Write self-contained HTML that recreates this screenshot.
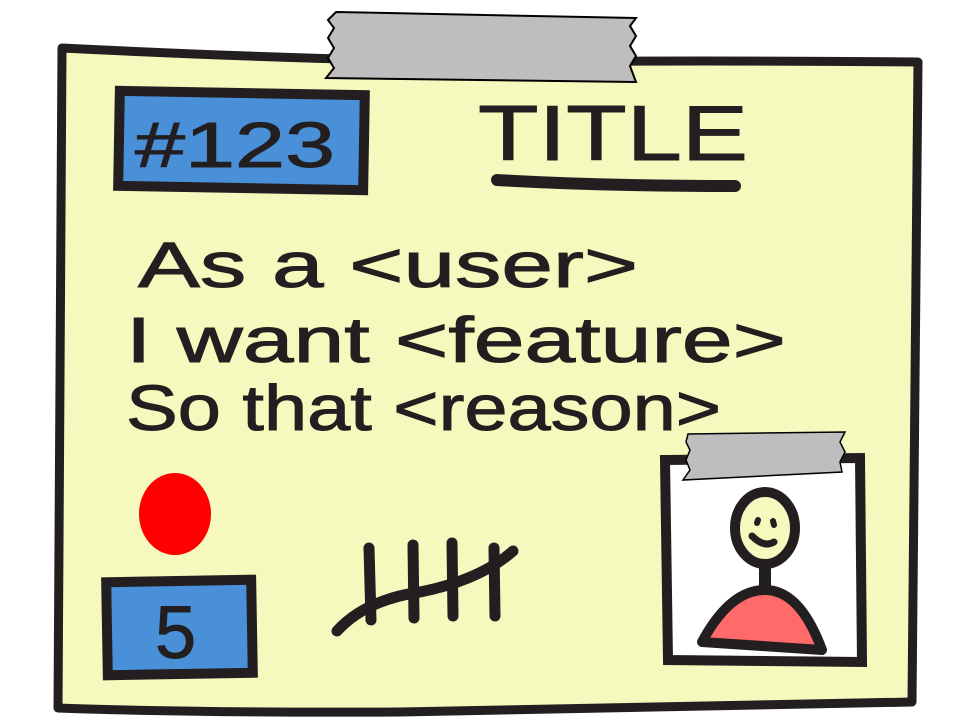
<!DOCTYPE html>
<html><head><style>
html,body{margin:0;padding:0;background:#fff;width:962px;height:720px;overflow:hidden}
svg{display:block}
text{font-family:"Liberation Sans",sans-serif;fill:#231f20;stroke:#231f20;stroke-width:1}
</style></head><body>
<svg width="962" height="720" viewBox="0 0 962 720">
<path d="M62,48 Q300,60 500,62 Q700,60 918,62 L912,702 Q600,708 400,712 Q200,713 58,708 Z" fill="#f6f9bd" stroke="#231f20" stroke-width="9" stroke-linejoin="round"/>
<path d="M336,12 L636,18 L630,26 L636,36 L630,46 L636,56 L630,66 L636,82 L326,78 L334,68 L328,58 L334,48 L328,38 L334,28 L328,20 Z" fill="#bebebe" stroke="#000" stroke-width="2"/>
<rect x="119" y="93" width="245" height="95" fill="#4a90d9" stroke="#231f20" stroke-width="10" transform="rotate(1 240 140)"/>
<text x="135" y="167" font-size="64" stroke-width="2" textLength="200" lengthAdjust="spacingAndGlyphs">#123</text>
<text x="478" y="160" font-size="78" stroke-width="1" textLength="270" lengthAdjust="spacingAndGlyphs">TITLE</text>
<path d="M497,180 Q600,186 735,186" stroke="#231f20" stroke-width="12" fill="none" stroke-linecap="round"/>
<text x="138" y="287" font-size="64" textLength="500" lengthAdjust="spacingAndGlyphs">As a &lt;user&gt;</text>
<text x="126" y="362" font-size="64" textLength="660" lengthAdjust="spacingAndGlyphs">I want &lt;feature&gt;</text>
<text x="126" y="430" font-size="64" textLength="595" lengthAdjust="spacingAndGlyphs">So that &lt;reason&gt;</text>
<ellipse cx="175" cy="514" rx="36" ry="41" fill="#f00"/>
<rect x="107" y="581" width="145" height="93" fill="#4a90d9" stroke="#231f20" stroke-width="10" transform="rotate(-1 180 628)"/>
<text x="155" y="658" font-size="74" stroke-width="2">5</text>
<g stroke="#231f20" stroke-width="11" stroke-linecap="round" fill="none">
<path d="M369,548 L371,620"/><path d="M413,545 L414,618"/><path d="M452,543 L453,616"/><path d="M494,548 L495,616"/>
<path d="M337,631 Q365,600 420,592 Q480,580 513,551"/>
</g>
<path d="M665,460 L860,458 L862,662 L668,660 Z" fill="#fff" stroke="#231f20" stroke-width="10"/>
<path d="M688,434 L845,432 L840,442 L845,452 L840,462 L842,472 L683,480 L690,470 L686,460 L690,450 L686,442 Z" fill="#bebebe" stroke="#000" stroke-width="1.5"/>
<ellipse cx="765" cy="528" rx="30" ry="36" fill="#f6f9bd" stroke="#231f20" stroke-width="10"/>
<path d="M758,520 L757,523 M773,521 L774,525" stroke="#231f20" stroke-width="6" stroke-linecap="round"/>
<path d="M752,536 Q764,548 774,542" stroke="#231f20" stroke-width="7" fill="none" stroke-linecap="round"/>
<path d="M765,564 L765,590" stroke="#231f20" stroke-width="12"/>
<path d="M702,642 Q730,590 765,590 Q800,590 822,650 Z" fill="#ff6b6b" stroke="#231f20" stroke-width="10" stroke-linejoin="round"/>
</svg>
</body></html>
